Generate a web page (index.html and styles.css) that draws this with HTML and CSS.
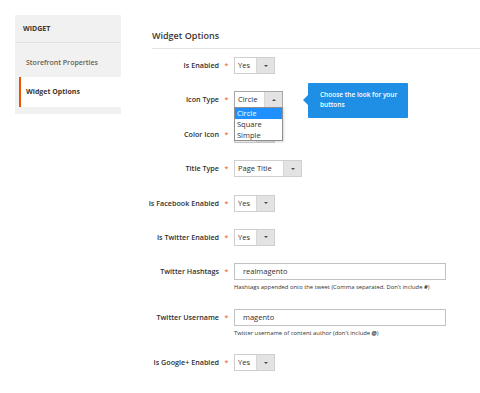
FILE: index.html
```html
<!DOCTYPE html>
<html lang="en">
<head>
    <meta charset="UTF-8">
    <meta name="viewport" content="width=device-width, initial-scale=1.0">
    <title>Widget Options</title>
    <link rel="stylesheet" href="styles.css">
</head>
<body>
    <div class="page">
        <nav class="sidebar">
            <div class="side-title">WIDGET</div>
            <a class="side-item">Storefront Properties</a>
            <a class="side-item active">Widget Options</a>
        </nav>

        <main class="main">
            <h2 class="section-title">Widget Options</h2>

            <div class="fields">
                <div class="field">
                    <label class="label">Is Enabled</label>
                    <span class="star">*</span>
                    <div class="control">
                        <div class="select"><span class="value">Yes</span><span class="arrow"></span></div>
                    </div>
                </div>

                <div class="field field-top">
                    <label class="label">Icon Type</label>
                    <span class="star">*</span>
                    <div class="control">
                        <div class="select select-md open"><span class="value">Circle</span><span class="arrow up"></span></div>
                        <ul class="dropdown">
                            <li class="selected">Circle</li>
                            <li>Square</li>
                            <li>Simple</li>
                        </ul>
                        <div class="tooltip">Choose the look for your buttons</div>
                    </div>
                </div>

                <div class="field">
                    <label class="label">Color Icon</label>
                    <span class="star">*</span>
                    <div class="control">
                        <!-- covered by the open dropdown above -->
                        <div class="select"><span class="value"></span><span class="arrow"></span></div>
                    </div>
                </div>

                <div class="field">
                    <label class="label">Title Type</label>
                    <span class="star">*</span>
                    <div class="control">
                        <div class="select select-lg"><span class="value">Page Title</span><span class="arrow"></span></div>
                    </div>
                </div>

                <div class="field">
                    <label class="label">Is Facebook Enabled</label>
                    <span class="star">*</span>
                    <div class="control">
                        <div class="select"><span class="value">Yes</span><span class="arrow"></span></div>
                    </div>
                </div>

                <div class="field">
                    <label class="label">Is Twitter Enabled</label>
                    <span class="star">*</span>
                    <div class="control">
                        <div class="select"><span class="value">Yes</span><span class="arrow"></span></div>
                    </div>
                </div>

                <div class="field">
                    <label class="label">Twitter Hashtags</label>
                    <span class="star">*</span>
                    <div class="control">
                        <div class="input">realmagento</div>
                        <div class="note">Hashtags appended onto the tweet (Comma separated. Don't include <b>#</b>)</div>
                    </div>
                </div>

                <div class="field">
                    <label class="label">Twitter Username</label>
                    <span class="star">*</span>
                    <div class="control">
                        <div class="input">magento</div>
                        <div class="note">Twitter username of content author (don't include <b>@</b>)</div>
                    </div>
                </div>

                <div class="field">
                    <label class="label">Is Google+ Enabled</label>
                    <span class="star">*</span>
                    <div class="control">
                        <div class="select"><span class="value">Yes</span><span class="arrow"></span></div>
                    </div>
                </div>
            </div>
        </main>
    </div>
</body>
</html>
```

FILE: styles.css
```css
body {
    font-family: "Open Sans", Arial, sans-serif;
    background-color: #fff;
    color: #303030;
    margin: 0;
}
.page {
    display: flex;
    align-items: flex-start;
}
.sidebar {
    width: 106px;
    margin: 15px 0 0 15px;
    padding-bottom: 7px;
    background-color: #f1f1f1;
}
.side-title {
    height: 27px;
    line-height: 27px;
    padding-left: 8px;
    border-bottom: 1px solid #e0e0e0;
    font-size: 7px;
    font-weight: 700;
    color: #41362f;
}
.side-item {
    display: block;
    height: 29px;
    line-height: 29px;
    padding: 5px 0 0 11px;
    font-size: 7px;
    font-weight: 600;
    color: #676056;
}
.side-item.active {
    height: 30px;
    line-height: 30px;
    padding-top: 0;
    margin-left: 4px;
    padding-left: 5px;
    border-left: 2px solid #eb5202;
    background-color: #fff;
    color: #41362f;
    font-weight: 700;
}
.main {
    flex: 1;
    margin-left: 15px;
    padding-top: 29px;
}
.section-title {
    margin: 0 0 0 16px;
    height: 14px;
    line-height: 14px;
    padding-bottom: 5px;
    border-bottom: 1px solid #e3e3e3;
    font-size: 9px;
    font-weight: 600;
    color: #41362f;
}
.fields {
    display: flex;
    flex-direction: column;
    gap: 17.4px;
    margin-top: 8px;
}
.field {
    display: flex;
    align-items: flex-start;
}
.label {
    width: 83px;
    text-align: right;
    line-height: 17px;
    font-size: 7.2px;
    font-weight: 600;
    color: #303030;
    white-space: nowrap;
}
.star {
    width: 15px;
    text-align: center;
    line-height: 17px;
    font-size: 7px;
    color: #eb5202;
}
.control {
    position: relative;
}
.select {
    display: flex;
    width: 41px;
    height: 17px;
    box-sizing: border-box;
    border: 1px solid #cfcfcf;
    background-color: #fff;
    font-size: 7.5px;
}
.select-md {
    width: 49px;
}
.select-lg {
    width: 68px;
}
.select.open {
    border-color: #a8a8a8;
}
.select .value {
    flex: 1;
    line-height: 15px;
    padding-left: 3px;
    color: #303030;
}
.select .arrow {
    position: relative;
    width: 17px;
    background-color: #e3e3e3;
    border-left: 1px solid #d6d6d6;
}
.select .arrow::after {
    content: "";
    position: absolute;
    left: 7px;
    top: 6.5px;
    border-left: 2px solid transparent;
    border-right: 2px solid transparent;
    border-top: 2px solid #514943;
}
.select .arrow.up::after {
    border-top: none;
    border-bottom: 2px solid #514943;
}
.input {
    width: 212px;
    height: 17px;
    box-sizing: border-box;
    border: 1px solid #c2c2c2;
    padding-left: 8px;
    line-height: 15px;
    font-size: 7.5px;
    color: #303030;
}
.note {
    margin-top: 3px;
    line-height: 8px;
    font-size: 5.85px;
    color: #303030;
    white-space: nowrap;
}
.dropdown {
    position: absolute;
    left: 0;
    top: 16px;
    z-index: 2;
    width: 49px;
    box-sizing: border-box;
    margin: 0;
    padding: 0;
    list-style: none;
    border: 1px solid #8f8f8f;
    background-color: #fff;
    box-shadow: 1px 1px 2px rgba(0, 0, 0, 0.15);
}
.dropdown li {
    height: 10.7px;
    line-height: 10.7px;
    padding-left: 2px;
    font-size: 7.5px;
    color: #303030;
}
.dropdown li.selected {
    background-color: #1e90ff;
    color: #fff;
}
.tooltip {
    position: absolute;
    left: 74px;
    top: -8px;
    width: 100px;
    height: 35px;
    box-sizing: border-box;
    padding: 7px 10px 0 12px;
    line-height: 10px;
    font-size: 6.5px;
    font-weight: 600;
    color: #fff;
    background-color: #1f8fe5;
    border-radius: 1px;
}
.tooltip::before {
    content: "";
    position: absolute;
    left: -5px;
    top: 12px;
    border-top: 5px solid transparent;
    border-bottom: 5px solid transparent;
    border-right: 5px solid #1f8fe5;
}
```
